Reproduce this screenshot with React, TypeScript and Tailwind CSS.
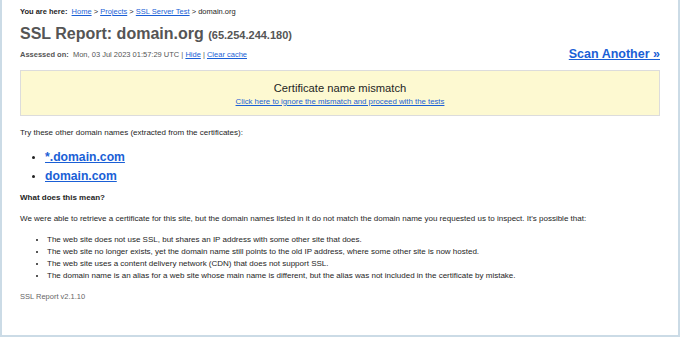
const font = { fontFamily: '"Liberation Sans", Arial, sans-serif' }

const reasons = [
  'The web site does not use SSL, but shares an IP address with some other site that does.',
  'The web site no longer exists, yet the domain name still points to the old IP address, where some other site is now hosted.',
  'The web site uses a content delivery network (CDN) that does not support SSL.',
  'The domain name is an alias for a web site whose main name is different, but the alias was not included in the certificate by mistake.',
]

function Link({ children, className = '' }: { children: React.ReactNode; className?: string }) {
  return <a href="#" className={`text-[#1a5fd6] underline ${className}`}>{children}</a>
}

export default function App() {
  return (
    <div style={font} className="w-[680px] h-[337px] bg-white border-x-2 border-b-2 border-[#cbdbe6] text-[#1e1e1e] overflow-hidden">
      <div className="px-[18px] pt-[6px]">
        <div className="text-[7.5px] leading-[12px]">
          <b>You are here:</b>&nbsp; <Link>Home</Link> &gt; <Link>Projects</Link> &gt; <Link>SSL Server Test</Link> &gt; domain.org
        </div>

        <div className="flex items-end justify-between">
          <div>
            <h1 className="mt-[7px] text-[#555] font-bold text-[16px] leading-[18px]">
              SSL Report: domain.org <span className="text-[11px]">(65.254.244.180)</span>
            </h1>
            <div className="mt-[5px] text-[7.5px] leading-[11px] text-[#555]">
              <b>Assessed on:</b>&nbsp; Mon, 03 Jul 2023 01:57:29 UTC | <Link>Hide</Link> | <Link>Clear cache</Link>
            </div>
          </div>
          <Link className="text-[12.5px] font-bold leading-[16px] mb-[-2px]">Scan Another »</Link>
        </div>

        <div className="mt-[10px] bg-[#fdf9d1] border border-[#dcdcdc] h-[46px] flex flex-col items-center justify-center">
          <div className="text-[11.2px] leading-[14px] mt-[1px]">Certificate name mismatch</div>
          <Link className="text-[7.8px] leading-[11px] mt-[1px]">Click here to ignore the mismatch and proceed with the tests</Link>
        </div>

        <p className="mt-[11px] text-[8px] leading-[12px]">Try these other domain names (extracted from the certificates):</p>

        <ul className="mt-[9px] ml-[19px] list-disc pl-[6px] text-[12.2px] leading-[19px] font-bold">
          <li className="marker:text-[#222] marker:text-[10px]"><Link>*.domain.com</Link></li>
          <li className="marker:text-[#222] marker:text-[10px]"><Link>domain.com</Link></li>
        </ul>

        <p className="mt-[6px] text-[8px] leading-[12px] font-bold">What does this mean?</p>

        <p className="mt-[9px] text-[8px] leading-[12px]">
          We were able to retrieve a certificate for this site, but the domain names listed in it do not match the domain name you requested us to inspect. It's possible that:
        </p>

        <ul className="mt-[9px] ml-[20px] list-disc pl-[7px] text-[8px] leading-[12px]">
          {reasons.map((r) => <li key={r}>{r}</li>)}
        </ul>

        <p className="mt-[9px] text-[7.5px] leading-[12px] text-[#666]">SSL Report v2.1.10</p>
      </div>
    </div>
  )
}
